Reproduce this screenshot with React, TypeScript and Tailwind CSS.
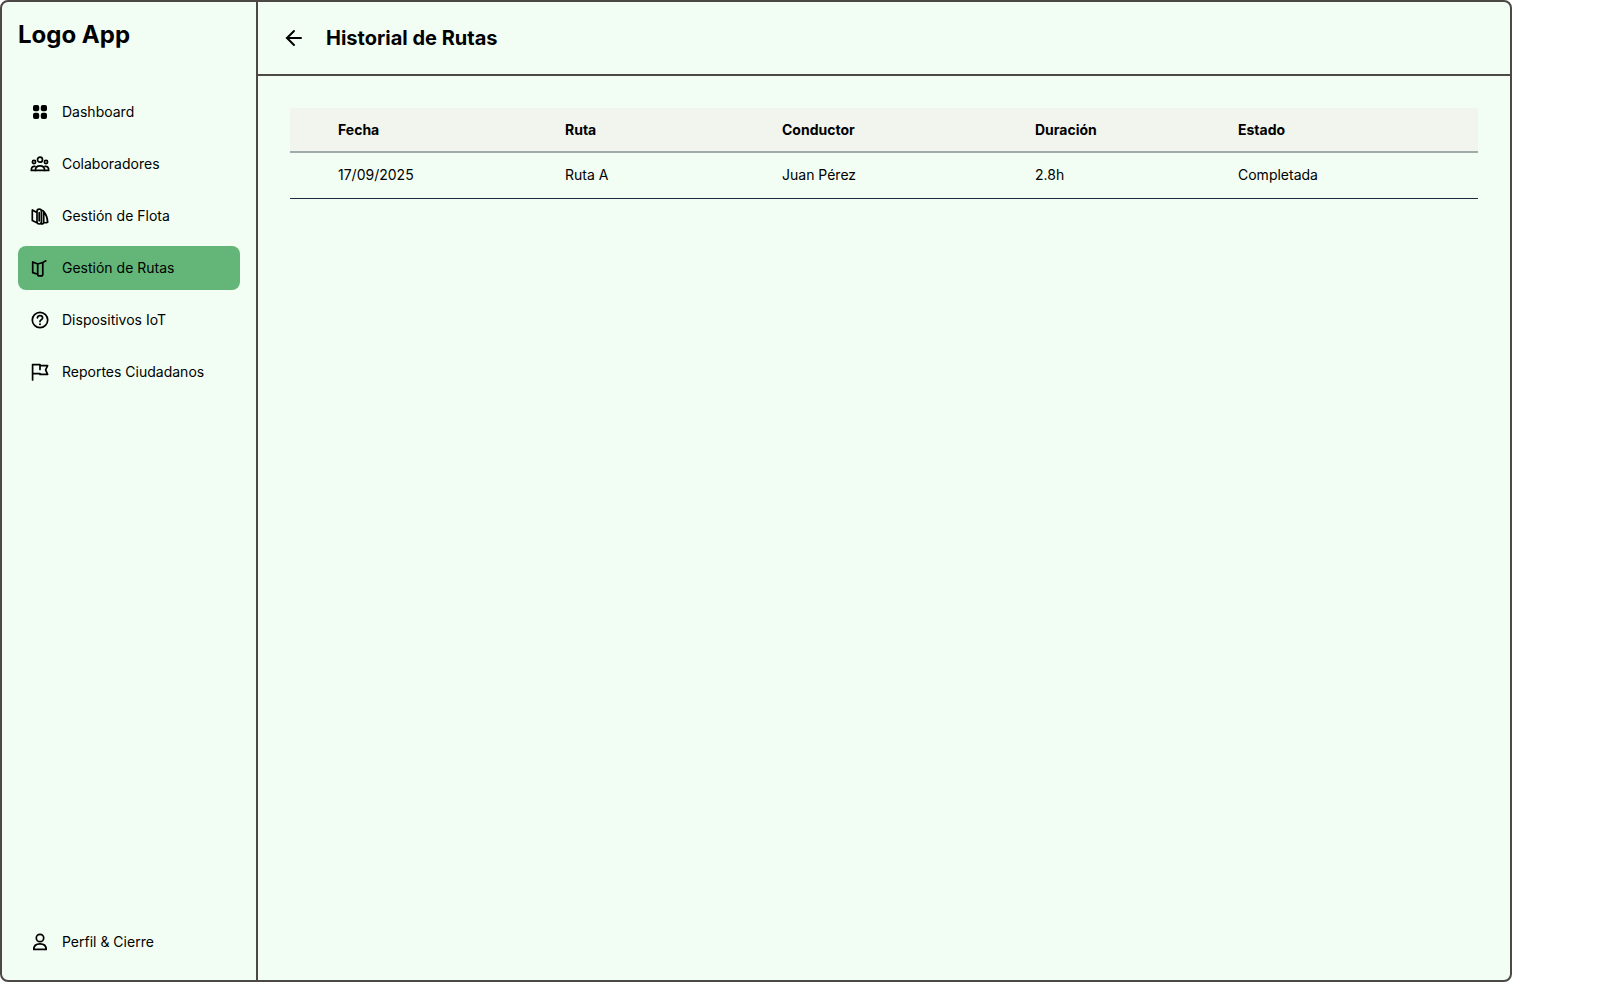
import type { ReactNode } from 'react';

type IconProps = { children: ReactNode };

function Icon({ children }: IconProps) {
  return (
    <svg
      viewBox="0 0 20 20"
      className="size-5 shrink-0"
      fill="none"
      stroke="currentColor"
      strokeWidth="1.7"
      strokeLinecap="round"
      strokeLinejoin="round"
      aria-hidden="true"
    >
      {children}
    </svg>
  );
}

const icons = {
  dashboard: (
    <Icon>
      <g fill="currentColor" stroke="none">
        <rect x="3" y="3" width="6.2" height="6.2" rx="2" />
        <rect x="10.8" y="3" width="6.2" height="6.2" rx="2" />
        <rect x="3" y="10.8" width="6.2" height="6.2" rx="2" />
        <rect x="10.8" y="10.8" width="6.2" height="6.2" rx="2" />
      </g>
    </Icon>
  ),
  team: (
    <Icon>
      <circle cx="10" cy="5.7" r="2.5" />
      <circle cx="4" cy="8" r="1.6" />
      <circle cx="16" cy="8" r="1.6" />
      <path d="M5.4 16.4c0-3 1.8-4.6 4.6-4.6s4.6 1.6 4.6 4.6z" />
      <path d="M5 12.4c-2.4-.4-3.7 1-3.7 4h4.1M15 12.4c2.4-.4 3.7 1 3.7 4h-4.1" />
    </Icon>
  ),
  fleet: (
    <Icon>
      <path d="M2.3 4v10.6l4.6 2.2M2.3 4l4.6 2.6M7 5.4c0-1.4 1.2-2.2 2.4-2.2s2 .9 2 2.2v10.4c0 1.3-.9 2.2-2.1 2.2S7 17.100 7 15.800zM9.200 6.600v8.200M11.200 4c1.300.100 2.300.8 3 1.900 2.100 2.900 3.300 6.300 3.500 10.300-1.300.6-2.700.7-4 .4M13.700 5.600v10.600c0 1-.9 1.700-2.400 1.700" />
    </Icon>
  ),
  routes: (
    <Icon>
      <path d="M2.700 4v10.600l5 1.700V6zM7.700 6v10.200c0 1 .7 1.700 1.700 1.700h1.700c1 0 1.700-.7 1.700-1.700V4.500L7.700 6M12.800 4.500l3-1.700" />
    </Icon>
  ),
  help: (
    <Icon>
      <circle cx="10" cy="10" r="7.7" />
      <path d="M7.4 7.8c.3-1.4 1.3-2.1 2.6-2.1 1.5 0 2.6.9 2.6 2.2 0 1.900-2.600 1.900-2.600 3.700" />
      <circle cx="10" cy="14.2" r="1" fill="currentColor" stroke="none" />
    </Icon>
  ),
  flag: (
    <Icon>
      <path d="M2.600 17.900V2.600h7.400v1h7.600l-2 4.300 2 4.500H10v-.8H2.600M10 3.600v3.800" />
    </Icon>
  ),
  profile: (
    <Icon>
      <circle cx="10" cy="6" r="3.7" />
      <path d="M3.8 17.4c0-3.6 2.4-5.6 6.2-5.600s6.200 2 6.200 5.600z" />
    </Icon>
  ),
};

const navigation = [
  { label: 'Dashboard', icon: icons.dashboard },
  { label: 'Colaboradores', icon: icons.team },
  { label: 'Gestión de Flota', icon: icons.fleet },
  { label: 'Gestión de Rutas', icon: icons.routes, active: true },
  { label: 'Dispositivos IoT', icon: icons.help },
  { label: 'Reportes Ciudadanos', icon: icons.flag },
];

type NavLinkProps = { label: string; icon: ReactNode; active?: boolean };

function NavLink({ label, icon, active = false }: NavLinkProps) {
  return (
    <a
      href="#"
      aria-current={active ? 'page' : undefined}
      className={`flex h-11 items-center gap-3 rounded-lg px-3 text-sm ${active ? 'bg-[#63b678]' : ''}`}
    >
      {icon}
      {label}
    </a>
  );
}

const columns = [
  { label: 'Fecha', width: 'w-[227px]' },
  { label: 'Ruta', width: 'w-[217px]' },
  { label: 'Conductor', width: 'w-[253px]' },
  { label: 'Duración', width: 'w-[203px]' },
  { label: 'Estado', width: 'w-[288px]' },
];

const rows = [['17/09/2025', 'Ruta A', 'Juan Pérez', '2.8h', 'Completada']];

export default function App() {
  return (
    <div className="flex min-h-screen w-full max-w-[1512px] overflow-hidden rounded-lg border-2 border-[#4b4845] bg-[#f2fef3] font-['Inter',sans-serif] text-black">
      <aside className="flex w-64 shrink-0 flex-col border-r-2 border-[#4b4845] p-4">
        <p className="text-2xl leading-[34px] font-bold">Logo App</p>
        <nav className="mt-[38px] flex flex-col gap-2" aria-label="Principal">
          {navigation.map((item) => (
            <NavLink key={item.label} {...item} />
          ))}
        </nav>
        <div className="mt-auto">
          <NavLink label="Perfil & Cierre" icon={icons.profile} />
        </div>
      </aside>
      <div className="flex min-w-0 flex-1 flex-col">
        <header className="flex h-[74px] items-center gap-5 border-b-2 border-[#4b4845] px-6">
          <button type="button" aria-label="Volver" className="flex size-6 items-center justify-center">
            <svg
              viewBox="0 0 24 24"
              className="size-6"
              fill="none"
              stroke="currentColor"
              strokeWidth="2"
              strokeLinecap="round"
              strokeLinejoin="round"
              aria-hidden="true"
            >
              <path d="M19 12H4.700M12 5l-7 7 7 7" />
            </svg>
          </button>
          <h1 className="text-xl font-bold">Historial de Rutas</h1>
        </header>
        <main className="flex-1 p-8">
          <table className="w-full table-fixed border-collapse text-left text-sm">
            <thead>
              <tr className="h-11 border-b-2 border-[#9dabab] bg-[#f2f4ee]">
                {columns.map((column) => (
                  <th key={column.label} scope="col" className={`pl-12 font-bold ${column.width}`}>
                    {column.label}
                  </th>
                ))}
              </tr>
            </thead>
            <tbody>
              {rows.map((row) => (
                <tr key={row[0]} className="h-[46px] border-b border-[#1c2740]">
                  {row.map((cell) => (
                    <td key={cell} className="pl-12">
                      {cell}
                    </td>
                  ))}
                </tr>
              ))}
            </tbody>
          </table>
        </main>
      </div>
    </div>
  );
}
